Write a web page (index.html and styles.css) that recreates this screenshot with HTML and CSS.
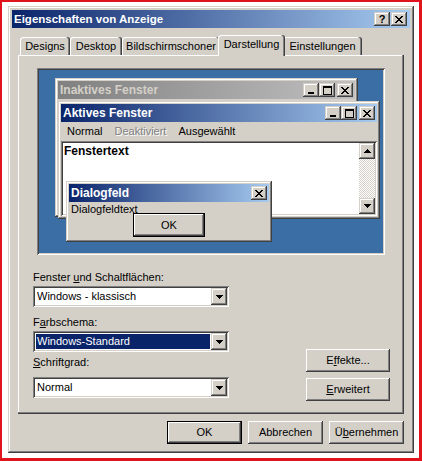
FILE: index.html
```html
<!DOCTYPE html>
<html lang="de">
<head>
<meta charset="utf-8">
<title>Eigenschaften von Anzeige</title>
<link rel="stylesheet" href="styles.css">
</head>
<body>
<div class="frame">
  <div class="window">
    <div class="titlebar">
      <span class="title-text">Eigenschaften von Anzeige</span>
      <div class="caption-btns">
        <span class="cbtn help">?</span>
        <span class="cbtn"><svg width="8" height="7" viewBox="0 0 8 7" shape-rendering="crispEdges"><path d="M0 0h2v1H0zM6 0h2v1H6zM1 1h2v1H1zM5 1h2v1H5zM2 2h4v1H2zM3 3h2v1H3zM2 4h4v1H2zM1 5h2v1H1zM5 5h2v1H5zM0 6h2v1H0zM6 6h2v1H6z" fill="#000"/></svg></span>
      </div>
    </div>
    <div class="tabs">
      <div class="tab t1">Designs</div>
      <div class="tab t2">Desktop</div>
      <div class="tab t3">Bildschirmschoner</div>
      <div class="tab t4 active">Darstellung</div>
      <div class="tab t5">Einstellungen</div>
    </div>
    <div class="panel">
      <div class="preview">
        <div class="pwin pw-inactive">
          <div class="ptitle gray">
            <span>Inaktives Fenster</span>
            <div class="pbtns">
              <span class="cbtn"><svg width="8" height="7" viewBox="0 0 8 7" shape-rendering="crispEdges"><path d="M1 5h6v2H1z" fill="#000"/></svg></span>
              <span class="cbtn"><svg width="9" height="9" viewBox="0 0 9 9" shape-rendering="crispEdges"><path d="M0 0h9v9H0zM1 2v6h7V2z" fill="#000" fill-rule="evenodd"/></svg></span>
              <span class="cbtn cl"><svg width="8" height="7" viewBox="0 0 8 7" shape-rendering="crispEdges"><path d="M0 0h2v1H0zM6 0h2v1H6zM1 1h2v1H1zM5 1h2v1H5zM2 2h4v1H2zM3 3h2v1H3zM2 4h4v1H2zM1 5h2v1H1zM5 5h2v1H5zM0 6h2v1H0zM6 6h2v1H6z" fill="#000"/></svg></span>
            </div>
          </div>
        </div>
        <div class="pwin pw-active">
          <div class="ptitle blue">
            <span>Aktives Fenster</span>
            <div class="pbtns">
              <span class="cbtn"><svg width="8" height="7" viewBox="0 0 8 7" shape-rendering="crispEdges"><path d="M1 5h6v2H1z" fill="#000"/></svg></span>
              <span class="cbtn"><svg width="9" height="9" viewBox="0 0 9 9" shape-rendering="crispEdges"><path d="M0 0h9v9H0zM1 2v6h7V2z" fill="#000" fill-rule="evenodd"/></svg></span>
              <span class="cbtn cl"><svg width="8" height="7" viewBox="0 0 8 7" shape-rendering="crispEdges"><path d="M0 0h2v1H0zM6 0h2v1H6zM1 1h2v1H1zM5 1h2v1H5zM2 2h4v1H2zM3 3h2v1H3zM2 4h4v1H2zM1 5h2v1H1zM5 5h2v1H5zM0 6h2v1H0zM6 6h2v1H6z" fill="#000"/></svg></span>
            </div>
          </div>
          <div class="menu">
            <span>Normal</span>
            <span class="disabled">Deaktiviert</span>
            <span>Ausgewählt</span>
          </div>
          <div class="textarea">
            <div class="tcontent">Fenstertext</div>
            <div class="vscroll">
              <span class="sbtn"><svg width="7" height="4" viewBox="0 0 7 4" shape-rendering="crispEdges"><path d="M3 0h1v1H3zM2 1h3v1H2zM1 2h5v1H1zM0 3h7v1H0z" fill="#000"/></svg></span>
              <span class="track"></span>
              <span class="sbtn"><svg width="7" height="4" viewBox="0 0 7 4" shape-rendering="crispEdges"><path d="M0 0h7v1H0zM1 1h5v1H1zM2 2h3v1H2zM3 3h1v1H3z" fill="#000"/></svg></span>
            </div>
          </div>
        </div>
        <div class="pwin pw-dialog">
          <div class="ptitle blue">
            <span>Dialogfeld</span>
            <div class="pbtns">
              <span class="cbtn"><svg width="8" height="7" viewBox="0 0 8 7" shape-rendering="crispEdges"><path d="M0 0h2v1H0zM6 0h2v1H6zM1 1h2v1H1zM5 1h2v1H5zM2 2h4v1H2zM3 3h2v1H3zM2 4h4v1H2zM1 5h2v1H1zM5 5h2v1H5zM0 6h2v1H0zM6 6h2v1H6z" fill="#000"/></svg></span>
            </div>
          </div>
          <div class="dtext">Dialogfeldtext</div>
          <div class="dok">OK</div>
        </div>
      </div>
      <div class="controls">
        <div class="fields">
          <div class="lbl first">Fenster <u>u</u>nd Schaltflächen:</div>
          <div class="combo">
            <span class="cval">Windows - klassisch</span>
            <span class="carrow"><svg width="7" height="4" viewBox="0 0 7 4" shape-rendering="crispEdges"><path d="M0 0h7v1H0zM1 1h5v1H1zM2 2h3v1H2zM3 3h1v1H3z" fill="#000"/></svg></span>
          </div>
          <div class="lbl">F<u>a</u>rbschema:</div>
          <div class="combo">
            <span class="cval sel">Windows-Standard</span>
            <span class="carrow"><svg width="7" height="4" viewBox="0 0 7 4" shape-rendering="crispEdges"><path d="M0 0h7v1H0zM1 1h5v1H1zM2 2h3v1H2zM3 3h1v1H3z" fill="#000"/></svg></span>
          </div>
          <div class="lbl third"><u>S</u>chriftgrad:</div>
          <div class="combo">
            <span class="cval">Normal</span>
            <span class="carrow"><svg width="7" height="4" viewBox="0 0 7 4" shape-rendering="crispEdges"><path d="M0 0h7v1H0zM1 1h5v1H1zM2 2h3v1H2zM3 3h1v1H3z" fill="#000"/></svg></span>
          </div>
        </div>
        <div class="side">
          <button class="btn side-btn">E<u>f</u>fekte...</button>
          <button class="btn side-btn"><u>E</u>rweitert</button>
        </div>
      </div>
    </div>
    <div class="footer">
      <button class="btn foot-btn default">OK</button>
      <button class="btn foot-btn">Abbrechen</button>
      <button class="btn foot-btn">Ü<u>b</u>ernehmen</button>
    </div>
  </div>
</div>
</body>
</html>
```

FILE: styles.css
```css
* { box-sizing: border-box; }
html, body { margin: 0; padding: 0; background: #fff; }
body {
  font-family: "Liberation Sans", Arial, sans-serif;
  font-size: 11px;
  line-height: 13px;
  color: #000;
}
.frame {
  width: 422px;
  height: 461px;
  border-style: solid;
  border-color: #e0141c;
  border-width: 2px 3px 3px 2px;
  padding: 4px 0 0 6px;
  background: #fff;
}
.window {
  width: 406px;
  height: 447px;
  background: #d4d0c8;
  padding: 4px;
  box-shadow: inset -1px -1px #404040, inset 1px 1px #d4d0c8, inset -2px -2px #808080, inset 2px 2px #fff;
  display: flex;
  flex-direction: column;
}
.titlebar {
  flex: none;
  height: 18px;
  display: flex;
  align-items: center;
  padding-left: 2px;
  background: linear-gradient(to right, #0a246a, #a6caf0);
  color: #fff;
  font-weight: bold;
  font-size: 11.5px;
}
.caption-btns {
  margin-left: auto;
  margin-right: 3px;
  display: flex;
  gap: 1px;
}
.cbtn {
  width: 16px;
  height: 14px;
  flex: none;
  background: #d4d0c8;
  box-shadow: inset -1px -1px #404040, inset 1px 1px #d4d0c8, inset -2px -2px #808080, inset 2px 2px #fff;
  display: flex;
  align-items: center;
  justify-content: center;
  color: #000;
}
.help {
  font-size: 11px;
  font-weight: bold;
  line-height: 14px;
}
.tabs {
  flex: none;
  height: 27px;
  padding: 7px 0 0 8px;
  display: flex;
  align-items: flex-end;
}
.tab {
  height: 18px;
  display: flex;
  align-items: center;
  justify-content: center;
  background: #d4d0c8;
  border-radius: 3px 3px 0 0;
  box-shadow: inset -1px 0 #404040, inset -2px 0 #808080, inset 1px 1px #fff;
}
.t1 { width: 50px; }
.t2 { width: 52px; }
.t3 { width: 98px; }
.t4 { width: 67px; }
.t5 { width: 79px; }
.tab.active {
  height: 21px;
  margin: 0 -2px -1px;
  padding-bottom: 2px;
  position: relative;
  z-index: 2;
}
.panel {
  flex: none;
  height: 359px;
  margin: 0 6px;
  position: relative;
  padding-top: 13px;
  display: flex;
  flex-direction: column;
  box-shadow: inset -1px -1px #404040, inset -2px -2px #808080, inset 1px 1px #fff;
}
.preview {
  flex: none;
  height: 187px;
  margin: 0 19px;
  position: relative;
  overflow: hidden;
  background: #3a6ea5;
  box-shadow: inset 1px 1px #808080, inset -1px -1px #fff, inset 2px 2px #404040, inset -2px -2px #d4d0c8;
}
.pwin {
  position: absolute;
  background: #d4d0c8;
  padding: 3px;
  display: flex;
  flex-direction: column;
  box-shadow: inset -1px -1px #404040, inset 1px 1px #d4d0c8, inset -2px -2px #808080, inset 2px 2px #fff;
}
.pw-inactive { left: 18px; top: 10px; width: 303px; height: 139px; }
.pw-active { left: 21px; top: 33px; width: 322px; height: 118px; }
.pw-dialog { left: 29px; top: 113px; width: 206px; height: 61px; }
.ptitle {
  flex: none;
  height: 18px;
  display: flex;
  align-items: center;
  padding-left: 2px;
  font-weight: bold;
  font-size: 12px;
  color: #fff;
}
.ptitle.blue { background: linear-gradient(to right, #0a246a, #a6caf0); }
.ptitle.gray { background: linear-gradient(to right, #808080, #c0c0c0); color: #d4d0c8; }
.pbtns {
  margin-left: auto;
  margin-right: 2px;
  display: flex;
}
.pbtns .cl { margin-left: 2px; }
.menu {
  flex: none;
  height: 19px;
  display: flex;
  align-items: center;
}
.menu span { padding: 0 6px; }
.menu .disabled { color: #808080; text-shadow: 1px 1px 0 #fff; }
.textarea {
  flex: 1;
  display: flex;
  background: #fff;
  padding: 2px;
  box-shadow: inset 1px 1px #808080, inset -1px -1px #fff, inset 2px 2px #404040, inset -2px -2px #d4d0c8;
}
.tcontent {
  flex: 1;
  font-weight: bold;
  font-size: 12px;
  padding: 2px 0 0 1px;
}
.vscroll {
  width: 16px;
  flex: none;
  display: flex;
  flex-direction: column;
}
.sbtn {
  height: 16px;
  flex: none;
  background: #d4d0c8;
  display: flex;
  align-items: center;
  justify-content: center;
  box-shadow: inset -1px -1px #404040, inset 1px 1px #d4d0c8, inset -2px -2px #808080, inset 2px 2px #fff;
}
.track {
  flex: 1;
  background: repeating-conic-gradient(#fff 0 25%, #d4d0c8 0 50%) 0 0 / 2px 2px;
}
.dtext { padding: 1px 0 0 2px; }
.dok {
  position: absolute;
  left: 67px;
  top: 32px;
  width: 72px;
  height: 24px;
  border: 1px solid #000;
  background: #d4d0c8;
  display: flex;
  align-items: center;
  justify-content: center;
  box-shadow: inset -1px -1px #404040, inset 1px 1px #fff, inset -2px -2px #808080;
}
.controls {
  flex: 1;
  display: flex;
  justify-content: space-between;
  padding: 0 14px 0 15px;
}
.fields {
  width: 196px;
  display: flex;
  flex-direction: column;
}
.lbl {
  height: 13px;
  margin-top: 9px;
  margin-bottom: 2px;
  white-space: nowrap;
}
.lbl.first { margin-top: 16px; }
.lbl.third { margin-top: 4px; margin-bottom: 8px; }
.combo {
  height: 21px;
  display: flex;
  padding: 2px;
  background: #fff;
  box-shadow: inset 1px 1px #808080, inset -1px -1px #fff, inset 2px 2px #404040, inset -2px -2px #d4d0c8;
}
.cval {
  flex: 1;
  padding-left: 2px;
  line-height: 17px;
  white-space: nowrap;
}
.cval.sel {
  background: #0a246a;
  color: #fff;
  margin: 1px;
  padding-left: 1px;
  line-height: 15px;
}
.carrow {
  width: 16px;
  height: 17px;
  flex: none;
  background: #d4d0c8;
  display: flex;
  align-items: center;
  justify-content: center;
  box-shadow: inset -1px -1px #404040, inset 1px 1px #d4d0c8, inset -2px -2px #808080, inset 2px 2px #fff;
}
.side {
  align-self: flex-end;
  margin-bottom: 13px;
  display: flex;
  flex-direction: column;
  gap: 6px;
}
.btn {
  font: inherit;
  color: #000;
  height: 23px;
  margin: 0;
  padding: 0;
  border: 0;
  background: #d4d0c8;
  display: flex;
  align-items: center;
  justify-content: center;
  box-shadow: inset -1px -1px #404040, inset 1px 1px #fff, inset -2px -2px #808080, inset 2px 2px #d4d0c8;
}
.side-btn { width: 84px; }
.foot-btn { width: 75px; }
.btn.default {
  border: 1px solid #000;
  box-shadow: inset -1px -1px #404040, inset 1px 1px #fff, inset -2px -2px #808080;
}
.footer {
  flex: none;
  margin-top: 7px;
  display: flex;
  justify-content: flex-end;
  gap: 6px;
  padding-right: 6px;
}
```
